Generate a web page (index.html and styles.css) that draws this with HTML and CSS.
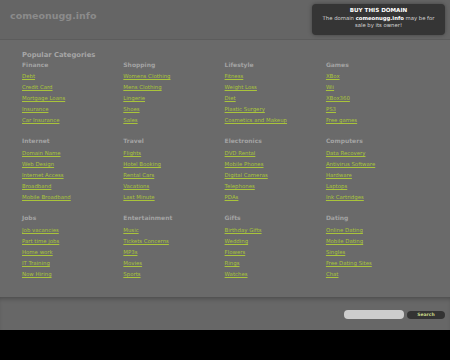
FILE: index.html
```html
<!DOCTYPE html>
<html lang="en">
<head>
    <meta charset="UTF-8">
    <meta name="viewport" content="width=device-width, initial-scale=1.0">
    <title>comeonugg.info</title>
    <link rel="stylesheet" href="styles.css">
</head>
<body>
    <div class="page">
        <div class="header">
            <div class="logo">comeonugg.info</div>
            <div class="buy-box">
                <div class="buy-title">BUY THIS DOMAIN</div>
                <div class="buy-text">The domain <b>comeonugg.info</b> may be for sale by its owner!</div>
            </div>
        </div>

        <div class="main">
            <div class="popular">Popular Categories</div>
            <div class="categories">
                <div class="category">
                    <div class="cat-title">Finance</div>
                    <a href="#">Debt</a>
                    <a href="#">Credit Card</a>
                    <a href="#">Mortgage Loans</a>
                    <a href="#">Insurance</a>
                    <a href="#">Car Insurance</a>
                </div>
                <div class="category">
                    <div class="cat-title">Shopping</div>
                    <a href="#">Womens Clothing</a>
                    <a href="#">Mens Clothing</a>
                    <a href="#">Lingerie</a>
                    <a href="#">Shoes</a>
                    <a href="#">Sales</a>
                </div>
                <div class="category">
                    <div class="cat-title">Lifestyle</div>
                    <a href="#">Fitness</a>
                    <a href="#">Weight Loss</a>
                    <a href="#">Diet</a>
                    <a href="#">Plastic Surgery</a>
                    <a href="#">Cosmetics and Makeup</a>
                </div>
                <div class="category">
                    <div class="cat-title">Games</div>
                    <a href="#">XBox</a>
                    <a href="#">Wii</a>
                    <a href="#">XBox360</a>
                    <a href="#">PS3</a>
                    <a href="#">Free games</a>
                </div>

                <div class="category">
                    <div class="cat-title">Internet</div>
                    <a href="#">Domain Name</a>
                    <a href="#">Web Design</a>
                    <a href="#">Internet Access</a>
                    <a href="#">Broadband</a>
                    <a href="#">Mobile Broadband</a>
                </div>
                <div class="category">
                    <div class="cat-title">Travel</div>
                    <a href="#">Flights</a>
                    <a href="#">Hotel Booking</a>
                    <a href="#">Rental Cars</a>
                    <a href="#">Vacations</a>
                    <a href="#">Last Minute</a>
                </div>
                <div class="category">
                    <div class="cat-title">Electronics</div>
                    <a href="#">DVD Rental</a>
                    <a href="#">Mobile Phones</a>
                    <a href="#">Digital Cameras</a>
                    <a href="#">Telephones</a>
                    <a href="#">PDAs</a>
                </div>
                <div class="category">
                    <div class="cat-title">Computers</div>
                    <a href="#">Data Recovery</a>
                    <a href="#">Antivirus Software</a>
                    <a href="#">Hardware</a>
                    <a href="#">Laptops</a>
                    <a href="#">Ink Cartridges</a>
                </div>

                <div class="category">
                    <div class="cat-title">Jobs</div>
                    <a href="#">Job vacancies</a>
                    <a href="#">Part time jobs</a>
                    <a href="#">Home work</a>
                    <a href="#">IT Training</a>
                    <a href="#">Now Hiring</a>
                </div>
                <div class="category">
                    <div class="cat-title">Entertainment</div>
                    <a href="#">Music</a>
                    <a href="#">Tickets Concerns</a>
                    <a href="#">MP3s</a>
                    <a href="#">Movies</a>
                    <a href="#">Sports</a>
                </div>
                <div class="category">
                    <div class="cat-title">Gifts</div>
                    <a href="#">Birthday Gifts</a>
                    <a href="#">Wedding</a>
                    <a href="#">Flowers</a>
                    <a href="#">Rings</a>
                    <a href="#">Watches</a>
                </div>
                <div class="category">
                    <div class="cat-title">Dating</div>
                    <a href="#">Online Dating</a>
                    <a href="#">Mobile Dating</a>
                    <a href="#">Singles</a>
                    <a href="#">Free Dating Sites</a>
                    <a href="#">Chat</a>
                </div>
            </div>
        </div>

        <div class="footer">
            <input type="text" class="search-input">
            <button class="search-btn">Search</button>
        </div>
    </div>
</body>
</html>
```

FILE: styles.css
```css
body {
    margin: 0;
    background-color: #000;
    font-family: "DejaVu Sans", Verdana, sans-serif;
}

.page {
    height: 330px;
    background-color: #676767;
    display: flex;
    flex-direction: column;
}

.header {
    height: 39px;
    border-bottom: 1px solid #5c5c5c;
    background-color: #656565;
    display: flex;
    justify-content: space-between;
    align-items: flex-start;
    padding: 0 5px 0 10px;
}

.logo {
    margin-top: 10px;
    font-size: 9.5px;
    font-weight: bold;
    color: #8b8b8b;
}

.buy-box {
    margin-top: 4px;
    width: 133px;
    height: 31px;
    box-sizing: border-box;
    padding: 3px 9px 0;
    background-color: #353535;
    border-radius: 4px;
    box-shadow: 0 0 4px rgba(0,0,0,0.35);
    text-align: center;
    color: #d8d8d8;
    font-size: 5.3px;
    line-height: 7px;
}

.buy-title {
    font-weight: bold;
    color: #fff;
    font-size: 5.6px;
    margin-bottom: 0.6px;
}

.buy-text b {
    color: #fff;
}

.main {
    height: 257px;
    background-color: #6a6a6a;
    padding: 9.5px 0 0 22px;
    box-sizing: border-box;
}

.popular {
    font-size: 6.8px;
    font-weight: bold;
    color: #a6a6a6;
    line-height: 11px;
    height: 9.2px;
}

.categories {
    display: grid;
    grid-template-columns: repeat(4, 101.3px);
    row-gap: 9px;
}

.category {
    display: flex;
    flex-direction: column;
    align-items: flex-start;
}

.cat-title {
    font-size: 6px;
    font-weight: bold;
    color: #a3a3a3;
    line-height: 11px;
    margin-bottom: 1.7px;
}

.category a {
    font-size: 5.4px;
    line-height: 11px;
    color: #a9c43a;
    text-decoration: underline;
}

.footer {
    flex: 1;
    background-color: #676767;
    box-shadow: inset 0 4px 4px -2px rgba(0,0,0,0.25);
    display: flex;
    justify-content: flex-end;
    align-items: flex-start;
    gap: 3px;
    padding: 13px 5px 0 0;
}

.search-input {
    width: 60px;
    height: 9px;
    box-sizing: border-box;
    border: none;
    border-radius: 4px;
    background-color: #cdcdcd;
    padding: 0;
}

.search-btn {
    width: 38px;
    height: 8px;
    margin-top: 1px;
    padding: 0;
    border: none;
    border-radius: 4px;
    background-color: #333;
    color: #c9d88a;
    font-family: "DejaVu Sans", Verdana, sans-serif;
    font-size: 4.5px;
    font-weight: bold;
    line-height: 8px;
}
```
